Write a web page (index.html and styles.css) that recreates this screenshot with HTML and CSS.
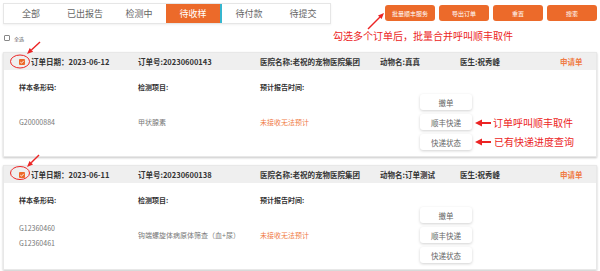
FILE: index.html
```html
<!DOCTYPE html>
<html lang="zh-CN">
<head>
    <meta charset="UTF-8">
    <meta name="viewport" content="width=device-width, initial-scale=1.0">
    <title>订单列表</title>
    <link rel="stylesheet" href="styles.css">
</head>
<body>
    <div class="topbar">
        <div class="tabs">
            <div class="tab">全部</div>
            <div class="tab">已出报告</div>
            <div class="tab">检测中</div>
            <div class="tab active">待收样</div>
            <div class="tab">待付款</div>
            <div class="tab">待提交</div>
        </div>
        <div class="top-actions">
            <button class="btn-orange">批量顺丰服务</button>
            <button class="btn-orange">导出订单</button>
            <button class="btn-orange">重置</button>
            <button class="btn-orange">搜索</button>
        </div>
    </div>

    <label class="select-all"><span class="box"></span>全选</label>

    <div class="order-card">
        <div class="order-head">
            <div class="cell"><span class="check"><svg viewBox="0 0 6 6"><path d="M1.3 3.1 L2.5 4.2 L4.8 1.8" fill="none" stroke="#fff" stroke-width="0.9"/></svg></span>订单日期：2023-06-12</div>
            <div class="cell">订单号:20230600143</div>
            <div class="cell">医院名称:老祝的宠物医院集团</div>
            <div class="cell">动物名:真真</div>
            <div class="cell">医生:祝秀峰</div>
            <div class="cell link">申请单</div>
        </div>
        <div class="order-body">
            <div class="label">样本条形码:</div>
            <div class="label">检测项目:</div>
            <div class="label">预计报告时间:</div>
            <div></div>
            <div class="value">G20000884</div>
            <div class="value">甲状腺素</div>
            <div class="value warn">未接收无法预计</div>
            <div class="order-actions">
                <button class="btn-white">撤单</button>
                <button class="btn-white">顺丰快递</button>
                <button class="btn-white">快递状态</button>
            </div>
        </div>
    </div>

    <div class="order-card">
        <div class="order-head">
            <div class="cell"><span class="check"><svg viewBox="0 0 6 6"><path d="M1.3 3.1 L2.5 4.2 L4.8 1.8" fill="none" stroke="#fff" stroke-width="0.9"/></svg></span>订单日期：2023-06-11</div>
            <div class="cell">订单号:20230600138</div>
            <div class="cell">医院名称:老祝的宠物医院集团</div>
            <div class="cell">动物名:订单测试</div>
            <div class="cell">医生:祝秀峰</div>
            <div class="cell link">申请单</div>
        </div>
        <div class="order-body">
            <div class="label">样本条形码:</div>
            <div class="label">检测项目:</div>
            <div class="label">预计报告时间:</div>
            <div></div>
            <div class="value barcodes"><span>G12360460</span><span>G12360461</span></div>
            <div class="value">钩端螺旋体病原体筛查（血+尿）</div>
            <div class="value warn">未接收无法预计</div>
            <div class="order-actions">
                <button class="btn-white">撤单</button>
                <button class="btn-white">顺丰快递</button>
                <button class="btn-white">快递状态</button>
            </div>
        </div>
    </div>

    <!-- annotations drawn over the screenshot -->
    <div class="note note-batch">勾选多个订单后，批量合并呼叫顺丰取件</div>
    <div class="note note-sf">订单呼叫顺丰取件</div>
    <div class="note note-track">已有快递进度查询</div>
    <svg class="marks" width="600" height="271" viewBox="0 0 600 271">
        <g stroke="#ec2424" stroke-width="1.4" fill="#ec2424">
            <line x1="368" y1="29" x2="380" y2="17"/>
            <polygon points="384,13 381.6,19 378,15.4" stroke="none"/>
            <line x1="40" y1="42" x2="31.4" y2="49.9"/>
            <polygon points="27,54 33.1,51.8 29.7,48.1" stroke="none"/>
            <line x1="39" y1="155" x2="31.2" y2="162.8"/>
            <polygon points="27,167 33,164.6 29.5,161" stroke="none"/>
            <line x1="481" y1="123" x2="491" y2="123" stroke-width="2"/>
            <polygon points="475,123 482,119.5 482,126.5" stroke="none"/>
            <line x1="481" y1="142" x2="491" y2="142" stroke-width="2"/>
            <polygon points="475,142 482,138.5 482,145.5" stroke="none"/>
        </g>
        <g stroke="#ec2424" stroke-width="1" fill="none">
            <ellipse cx="20" cy="61.5" rx="9.5" ry="6.5"/>
            <ellipse cx="20" cy="173" rx="9.5" ry="6.5"/>
        </g>
    </svg>
</body>
</html>
```

FILE: styles.css
```css
:root {
    --orange: #ec6a2a;
    --orange-text: #f07b45;
    --teal: #36b6cf;
    --red: #ec2424;
    --text-dark: #333;
    --text-gray: #777;
}

body {
    font-family: 'Noto Sans CJK SC', 'Noto Sans', sans-serif;
    color: var(--text-dark);
    margin: 0;
    padding: 3px;
    background-color: #fff;
    position: relative;
    height: 265px;
    overflow: hidden;
}

button {
    font-family: inherit;
    border: none;
    padding: 0;
    cursor: pointer;
}

.topbar {
    display: flex;
    justify-content: space-between;
    align-items: flex-start;
}

.tabs {
    display: flex;
    background-color: #fff;
    border: 1px solid #e6e6e6;
    box-shadow: 0 1px 2px rgba(0, 0, 0, 0.06);
}

.tab {
    width: 54px;
    height: 19px;
    line-height: 19px;
    text-align: center;
    font-size: 9px;
    color: #666;
}

.tab.active {
    background-color: var(--orange);
    color: #fff;
    border-right: 2px solid var(--teal);
}

.top-actions {
    display: flex;
    gap: 4px;
    margin-top: 2px;
}

.btn-orange {
    width: 50px;
    height: 16px;
    background-color: var(--orange);
    color: #fff;
    font-size: 6px;
    border-radius: 3px;
}

.select-all {
    display: flex;
    align-items: center;
    gap: 4px;
    margin: 10px 0 10px 1px;
    height: 8px;
    font-size: 5px;
    color: #666;
}

.select-all .box {
    width: 4px;
    height: 4px;
    border: 1px solid #888;
    border-radius: 1px;
}

.order-card {
    background-color: #fff;
    border: 1px solid #e8e8e8;
    box-shadow: 0 1px 2px rgba(0, 0, 0, 0.22);
    margin-bottom: 8px;
}

.order-head {
    display: grid;
    grid-template-columns: 119px 122px 120px 80px 100px 1fr;
    align-items: center;
    height: 17px;
    padding-left: 15px;
    background-color: #efefef;
    font-size: 7.5px;
    font-weight: bold;
}

.order-head .cell {
    display: flex;
    align-items: center;
    white-space: nowrap;
}

.order-head .link {
    color: var(--orange-text);
}

.check {
    width: 6px;
    height: 6px;
    background-color: var(--orange);
    border-radius: 1px;
    margin-right: 6px;
    display: flex;
}

.check svg {
    width: 6px;
    height: 6px;
}

.order-body {
    display: grid;
    grid-template-columns: 119px 122px 160px 52px;
    grid-template-rows: 14px auto;
    padding: 10px 0 6px 15px;
    font-size: 7px;
}

.order-body .label {
    font-weight: bold;
    line-height: 14px;
    align-self: start;
}

.order-body .value {
    align-self: center;
    color: var(--text-gray);
    white-space: nowrap;
}

.order-body .warn {
    color: var(--orange-text);
}

.barcodes {
    display: flex;
    flex-direction: column;
    gap: 5px;
}

.order-actions {
    display: flex;
    flex-direction: column;
    gap: 4px;
}

.btn-white {
    height: 16px;
    background-color: #fff;
    color: #666;
    font-size: 7.5px;
    border-radius: 3px;
    box-shadow: 0 1px 3px rgba(0, 0, 0, 0.18);
}

.note {
    position: absolute;
    color: var(--red);
    font-size: 10px;
    line-height: 12px;
    white-space: nowrap;
}

.note-batch {
    left: 333px;
    top: 30px;
}

.note-sf {
    left: 493px;
    top: 117px;
}

.note-track {
    left: 494px;
    top: 136px;
}

.marks {
    position: absolute;
    left: 0;
    top: 0;
    pointer-events: none;
}
```
